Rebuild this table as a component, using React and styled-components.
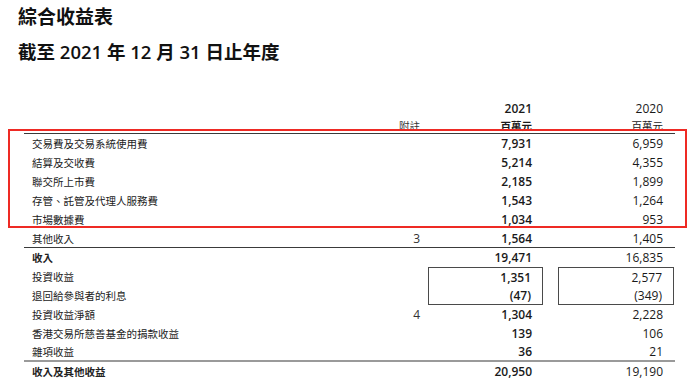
import React from 'react';
import styled, { createGlobalStyle } from 'styled-components';

const GlobalStyle = createGlobalStyle`
  html, body {
    margin: 0;
    padding: 0;
    background: #ffffff;
  }
  body {
    font-family: "Open Sans", "Noto Sans CJK TC", sans-serif;
    color: #1a1a1a;
  }
`;

const Page = styled.div`
  width: 693px;
  height: 381px;
  overflow: hidden;
  padding-top: 4px;
  box-sizing: border-box;
`;

const Title = styled.h1`
  margin: 0 0 0 18px;
  font-family: "Noto Sans CJK TC", sans-serif;
  font-size: 19px;
  font-weight: 700;
  line-height: 24px;
  color: #111;
`;

const SubTitle = styled.h2`
  margin: 11px 0 0 18px;
  font-family: "Open Sans", "Noto Sans CJK TC", sans-serif;
  font-size: 18.5px;
  font-weight: 600;
  line-height: 26px;
  color: #111;
`;

const Table = styled.div`
  margin: 34px 0 0 24px;
  width: 651px;
`;

const Row = styled.div`
  display: grid;
  grid-template-columns: 356px 40px 112px 131px 12px;
  align-items: center;
  height: ${(p) => p.$h || 19}px;
  border-bottom: ${(p) =>
    p.$rule === 'dark' ? '1px solid #3a3a3a' : p.$rule === 'gray' ? '2px solid #9a9a9a' : 'none'};
  box-sizing: border-box;
`;

const Label = styled.div`
  padding-left: 8px;
  font-family: "Noto Sans CJK TC", sans-serif;
  font-size: 10.5px;
  font-weight: ${(p) => (p.$bold ? 700 : 400)};
  color: #222;
  white-space: nowrap;
`;

const Note = styled.div`
  text-align: right;
  font-family: "Open Sans", "Noto Sans CJK TC", sans-serif;
  font-size: ${(p) => (p.$cjk ? '10.5px' : '12px')};
  color: #333;
`;

const Num = styled.div`
  text-align: right;
  font-size: 12px;
  font-weight: ${(p) => (p.$bold ? 600 : 400)};
  color: #1a1a1a;
  font-family: "Open Sans", "Noto Sans CJK TC", sans-serif;
  align-self: stretch;
  display: flex;
  align-items: center;
  justify-content: flex-end;
  box-sizing: border-box;
  margin-left: ${(p) => (p.$box ? p.$inset : 0)}px;
  margin-right: ${(p) => (p.$box ? -11 : 0)}px;
  padding-right: ${(p) => (p.$box ? 11 : 0)}px;
  border: ${(p) => (p.$box ? '1px solid #4a4a4a' : 'none')};
  border-top: ${(p) => (p.$box === 'bottom' ? 'none' : undefined)};
  border-bottom: ${(p) => (p.$box === 'top' ? 'none' : undefined)};
`;

const Unit = styled.span`
  font-family: "Noto Sans CJK TC", sans-serif;
  font-size: 10.5px;
  font-weight: ${(p) => (p.$bold ? 700 : 400)};
`;

const Highlight = styled.div`
  position: relative;
  &::after {
    content: '';
    position: absolute;
    top: -5px;
    left: -16px;
    right: -12px;
    bottom: 1px;
    border: 2px solid #ee2a24;
    pointer-events: none;
  }
`;

const feeRows = [
  ['交易費及交易系統使用費', '', '7,931', '6,959'],
  ['結算及交收費', '', '5,214', '4,355'],
  ['聯交所上市費', '', '2,185', '1,899'],
  ['存管、託管及代理人服務費', '', '1,543', '1,264'],
  ['市場數據費', '', '1,034', '953'],
];

const LineItem = ({ label, note, a, b, bold, rule, box }) => (
  <Row $rule={rule}>
    <Label $bold={bold}>{label}</Label>
    <Note>{note}</Note>
    <Num $bold $box={box} $inset={8}>{a}</Num>
    <Num $box={box} $inset={26}>{b}</Num>
  </Row>
);

export default function App() {
  return (
    <Page>
      <GlobalStyle />
      <Title>綜合收益表</Title>
      <SubTitle>截至 2021 年 12 月 31 日止年度</SubTitle>
      <Table>
        <Row $h={18}>
          <Label />
          <Note />
          <Num $bold>2021</Num>
          <Num>2020</Num>
        </Row>
        <Row $h={17} $rule="dark">
          <Label />
          <Note $cjk>附註</Note>
          <Num><Unit $bold>百萬元</Unit></Num>
          <Num><Unit>百萬元</Unit></Num>
        </Row>
        <Highlight>
          {feeRows.map(([label, note, a, b]) => (
            <LineItem key={label} label={label} note={note} a={a} b={b} />
          ))}
        </Highlight>
        <LineItem label="其他收入" note="3" a="1,564" b="1,405" rule="dark" />
        <LineItem label="收入" a="19,471" b="16,835" bold />
        <LineItem label="投資收益" a="1,351" b="2,577" box="top" />
        <LineItem label="退回給參與者的利息" a="(47)" b="(349)" box="bottom" />
        <LineItem label="投資收益淨額" note="4" a="1,304" b="2,228" />
        <LineItem label="香港交易所慈善基金的捐款收益" a="139" b="106" />
        <LineItem label="雜項收益" a="36" b="21" rule="gray" />
        <LineItem label="收入及其他收益" a="20,950" b="19,190" bold />
      </Table>
    </Page>
  );
}
